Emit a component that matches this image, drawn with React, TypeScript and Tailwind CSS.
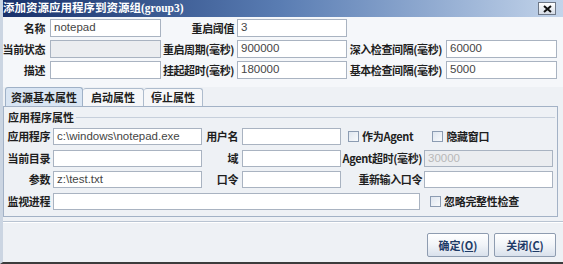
import React from 'react'

const CJK = "font-['Noto_Sans_CJK_SC',sans-serif]"
const LATIN = "font-['Liberation_Sans','Noto_Sans_CJK_SC',sans-serif]"

function Label({ w, pr = 4, children }: { w: number; pr?: number; children: React.ReactNode }) {
  return (
    <div
      className={`${CJK} text-[11px] font-bold tracking-[-0.4px] text-[#1e1e1e] text-right whitespace-nowrap leading-none shrink-0`}
      style={{ width: w, paddingRight: pr }}
    >
      {children}
    </div>
  )
}

function Field({ w, value = '', disabled = false, h = 18 }: { w: number; value?: string; disabled?: boolean; h?: number }) {
  return (
    <div
      className={`${LATIN} shrink-0 border border-[#a9b3c1] text-[11.5px] leading-none flex items-center pl-[3px] ${
        disabled ? 'bg-[#ebedf0] text-[#b8b8b8]' : 'bg-white text-[#454545]'
      }`}
      style={{ width: w, height: h }}
    >
      {value}
    </div>
  )
}

function Check({ label }: { label: string }) {
  return (
    <div className="flex items-center gap-[3px] shrink-0">
      <div className="w-[11px] h-[11px] border border-[#8c9cb2] bg-gradient-to-br from-[#dfe6ef] to-[#f8fafc]" />
      <span className={`${CJK} text-[11px] font-bold tracking-[-0.3px] text-[#1e1e1e] leading-none whitespace-nowrap`}>{label}</span>
    </div>
  )
}

function Button({ text, mnemonic }: { text: string; mnemonic: string }) {
  return (
    <div className="w-[62px] h-[24px] border border-[#8e9cb0] rounded-[2px] bg-gradient-to-b from-white via-[#f1f4f8] to-[#d9e1ec] flex items-center justify-center">
      <span className={`${CJK} text-[11px] font-bold text-[#1d3a66] leading-none`}>
        {text}(<span className="underline">{mnemonic}</span>)
      </span>
    </div>
  )
}

export default function App() {
  return (
    <div className="w-[563px] h-[264px] overflow-hidden bg-[#eef1f5] border-l-[3px] border-l-[#cbd5e2] border-b-2 border-b-[#3c3c3c] flex flex-col">
      {/* title bar */}
      <div className="h-[17px] -ml-[3px] flex items-center justify-between bg-gradient-to-r from-[#18306a] via-[#5a7db3] to-[#c3d4ea] pl-[3px] pr-[7px] shrink-0">
        <span className={`${CJK} text-white text-[11.5px] font-bold leading-none whitespace-nowrap`}>
          添加资源应用程序到资源组<span className="font-['Liberation_Serif',serif]">(group3)</span>
        </span>
        <div className="w-[18px] h-[13px] border border-[#6d7786] bg-gradient-to-b from-white to-[#d6dde7] flex items-center justify-center">
          <svg width="9" height="8" viewBox="0 0 9 8">
            <path d="M1 1 L8 7 M8 1 L1 7" stroke="#111" strokeWidth="2" />
          </svg>
        </div>
      </div>

      {/* top fields */}
      <div className="flex flex-col gap-[3px] pt-[2px] -ml-[3px] bg-[#f5f7fa]">
        <div className="flex items-center">
          <Label w={50} pr={5}>名称</Label>
          <Field w={111} value="notepad" />
          <Label w={76} pr={3}>重启阈值</Label>
          <Field w={110} value="3" />
        </div>
        <div className="flex items-center">
          <Label w={50} pr={5}>当前状态</Label>
          <Field w={111} disabled />
          <Label w={76} pr={3}>重启周期(毫秒)</Label>
          <Field w={110} value="900000" />
          <Label w={99} pr={4}>深入检查间隔(毫秒)</Label>
          <Field w={111} value="60000" />
        </div>
        <div className="flex items-center pb-[8px]">
          <Label w={50} pr={5}>描述</Label>
          <Field w={111} />
          <Label w={76} pr={3}>挂起超时(毫秒)</Label>
          <Field w={110} value="180000" />
          <Label w={99} pr={4}>基本检查间隔(毫秒)</Label>
          <Field w={111} value="5000" />
        </div>
      </div>

      {/* tabs */}
      <div className="flex items-end h-[19px] pl-[2px] shrink-0">
        <div className={`${CJK} h-[19px] w-[78px] border border-b-0 border-[#9fb1c7] rounded-t-[3px] bg-[#d9e5f3] text-[11px] font-bold text-[#1e1e1e] flex items-center justify-center leading-none`}>
          资源基本属性
        </div>
        <div className={`${CJK} h-[18px] w-[61px] border border-b-0 border-l-0 border-[#aebccd] rounded-t-[3px] bg-[#f6f7f9] text-[11px] font-bold text-[#1e1e1e] flex items-center justify-center leading-none`}>
          启动属性
        </div>
        <div className={`${CJK} h-[18px] w-[59px] border border-b-0 border-l-0 border-[#aebccd] rounded-t-[3px] bg-[#f6f7f9] text-[11px] font-bold text-[#1e1e1e] flex items-center justify-center leading-none`}>
          停止属性
        </div>
      </div>

      {/* tab panel */}
      <div className="w-[555px] h-[111px] border border-[#a3b2c6] bg-[#eef1f5] shrink-0 flex flex-col">
        <div className="flex items-center h-[17px] mt-[2px] pl-[4px] pr-[2px]">
          <span className={`${CJK} text-[11px] font-bold text-[#1e1e1e] leading-none pr-[2px]`}>应用程序属性</span>
          <div className="flex-1 h-px bg-[#c6cfdb]" />
        </div>
        <div className="flex flex-col mt-[2px]">
          <div className="flex items-center">
            <Label w={49} pr={3}>应用程序</Label>
            <Field w={149} h={17} value="c:\windows\notepad.exe" />
            <Label w={40} pr={4}>用户名</Label>
            <Field w={99} h={17} />
            <div className="w-[7px]" />
            <Check label="作为Agent" />
            <div className="w-[19px]" />
            <Check label="隐藏窗口" />
          </div>
          <div className="flex items-center mt-[5px]">
            <Label w={49} pr={3}>当前目录</Label>
            <Field w={149} h={17} />
            <Label w={40} pr={4}>域</Label>
            <Field w={99} h={17} />
            <Label w={83} pr={2}>Agent超时(毫秒)</Label>
            <Field w={129} h={17} value="30000" disabled />
          </div>
          <div className="flex items-center mt-[4px]">
            <Label w={49} pr={3}>参数</Label>
            <Field w={149} h={17} value="z:\test.txt" />
            <Label w={40} pr={4}>口令</Label>
            <Field w={99} h={17} />
            <Label w={83} pr={2}>重新输入口令</Label>
            <Field w={129} h={17} />
          </div>
          <div className="flex items-center mt-[5px]">
            <Label w={49} pr={3}>监视进程</Label>
            <Field w={367} h={17} />
            <div className="w-[10px]" />
            <Check label="忽略完整性检查" />
          </div>
        </div>
      </div>

      {/* separator */}
      <div className="mt-[4px] h-[2px] border-t border-[#b9c4d2] border-b border-b-white -ml-[3px]" />

      {/* buttons */}
      <div className="flex justify-end gap-[5px] pr-[7px] mt-[10px]">
        <Button text="确定" mnemonic="O" />
        <Button text="关闭" mnemonic="C" />
      </div>
    </div>
  )
}
